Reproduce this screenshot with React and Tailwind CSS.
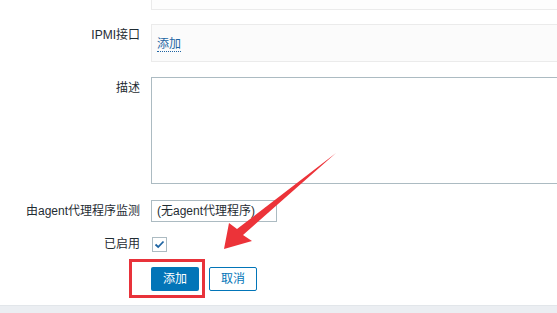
import React from 'react';

const font = { fontFamily: '"Liberation Sans", "Noto Sans CJK SC", sans-serif' };

const Row = ({ label, labelClass = '', className = '', children }) => (
  <div className={`flex ${className}`}>
    <div className={`w-[140px] shrink-0 text-right text-[12px] text-[#1f2c33] ${labelClass}`}>{label}</div>
    <div className="ml-[11px] flex-1">{children}</div>
  </div>
);

export default function App() {
  return (
    <div className="relative w-[557px] h-[313px] overflow-hidden bg-white" style={font}>
      {/* top field (cut off) */}
      <Row>
        <div className="h-[10px] w-[420px] border-l border-b border-[#ebebeb] bg-[#fdfdfd]" />
      </Row>

      <Row label="IPMI接口" labelClass="pt-[3px] leading-[16px]" className="mt-[14px]">
        <div className="h-[38px] w-[420px] border border-[#ebebeb] bg-[#fbfbfb] pl-[5px] pt-[6px]">
          <span className="text-[12px] leading-[16px] text-[#1f65a3] border-b border-dotted border-[#1f65a3]">添加</span>
        </div>
      </Row>

      <Row label="描述" labelClass="pt-[3px] leading-[16px]" className="mt-[15px]">
        <div className="h-[107px] w-[420px] border border-[#acbbc2] bg-white" />
      </Row>

      <Row label="由agent代理程序监测" labelClass="leading-[22px]" className="mt-[16px]">
        <div className="flex h-[22px] w-[126px] items-center justify-between border border-[#acbbc2] bg-white pl-[5px] pr-[4px] text-[12px] text-[#1f2c33]">
          <span>(无agent代理程序)</span>
          <span className="text-[9px] text-[#768d99]">▼</span>
        </div>
      </Row>

      <Row label="已启用" labelClass="leading-[15px]" className="mt-[15px]">
        <div className="ml-[1px] flex h-[15px] w-[15px] items-center justify-center border border-[#acbbc2] bg-white">
          <svg width="11" height="9" viewBox="0 0 11 9">
            <path d="M1.5 4.5 L4.2 7 L9.5 1.5" fill="none" stroke="#1f65a3" strokeWidth="1.8" />
          </svg>
        </div>
      </Row>

      <Row className="mt-[15px]">
        <div className="flex gap-[10px]">
          <button className="h-[24px] w-[48px] rounded-[2px] bg-[#0275b8] text-[12px] text-white">添加</button>
          <button className="h-[24px] w-[48px] rounded-[2px] border border-[#0275b8] bg-white text-[12px] text-[#0275b8]">取消</button>
        </div>
      </Row>

      <div className="mt-[14px] h-[10px] border-t border-[#e2e6ea] bg-[#ebeef2]" />

      {/* annotation: red box */}
      <div className="absolute left-[129px] top-[259px] h-[39px] w-[76px] border-[3px] border-[#e8323a]" />

      {/* annotation: red arrow */}
      <svg className="absolute left-0 top-0" width="557" height="313" viewBox="0 0 557 313">
        <polygon
          points="224,249 229,223 237,229 336,153 243,235 252,241"
          fill="#ec3339"
        />
      </svg>
    </div>
  );
}
